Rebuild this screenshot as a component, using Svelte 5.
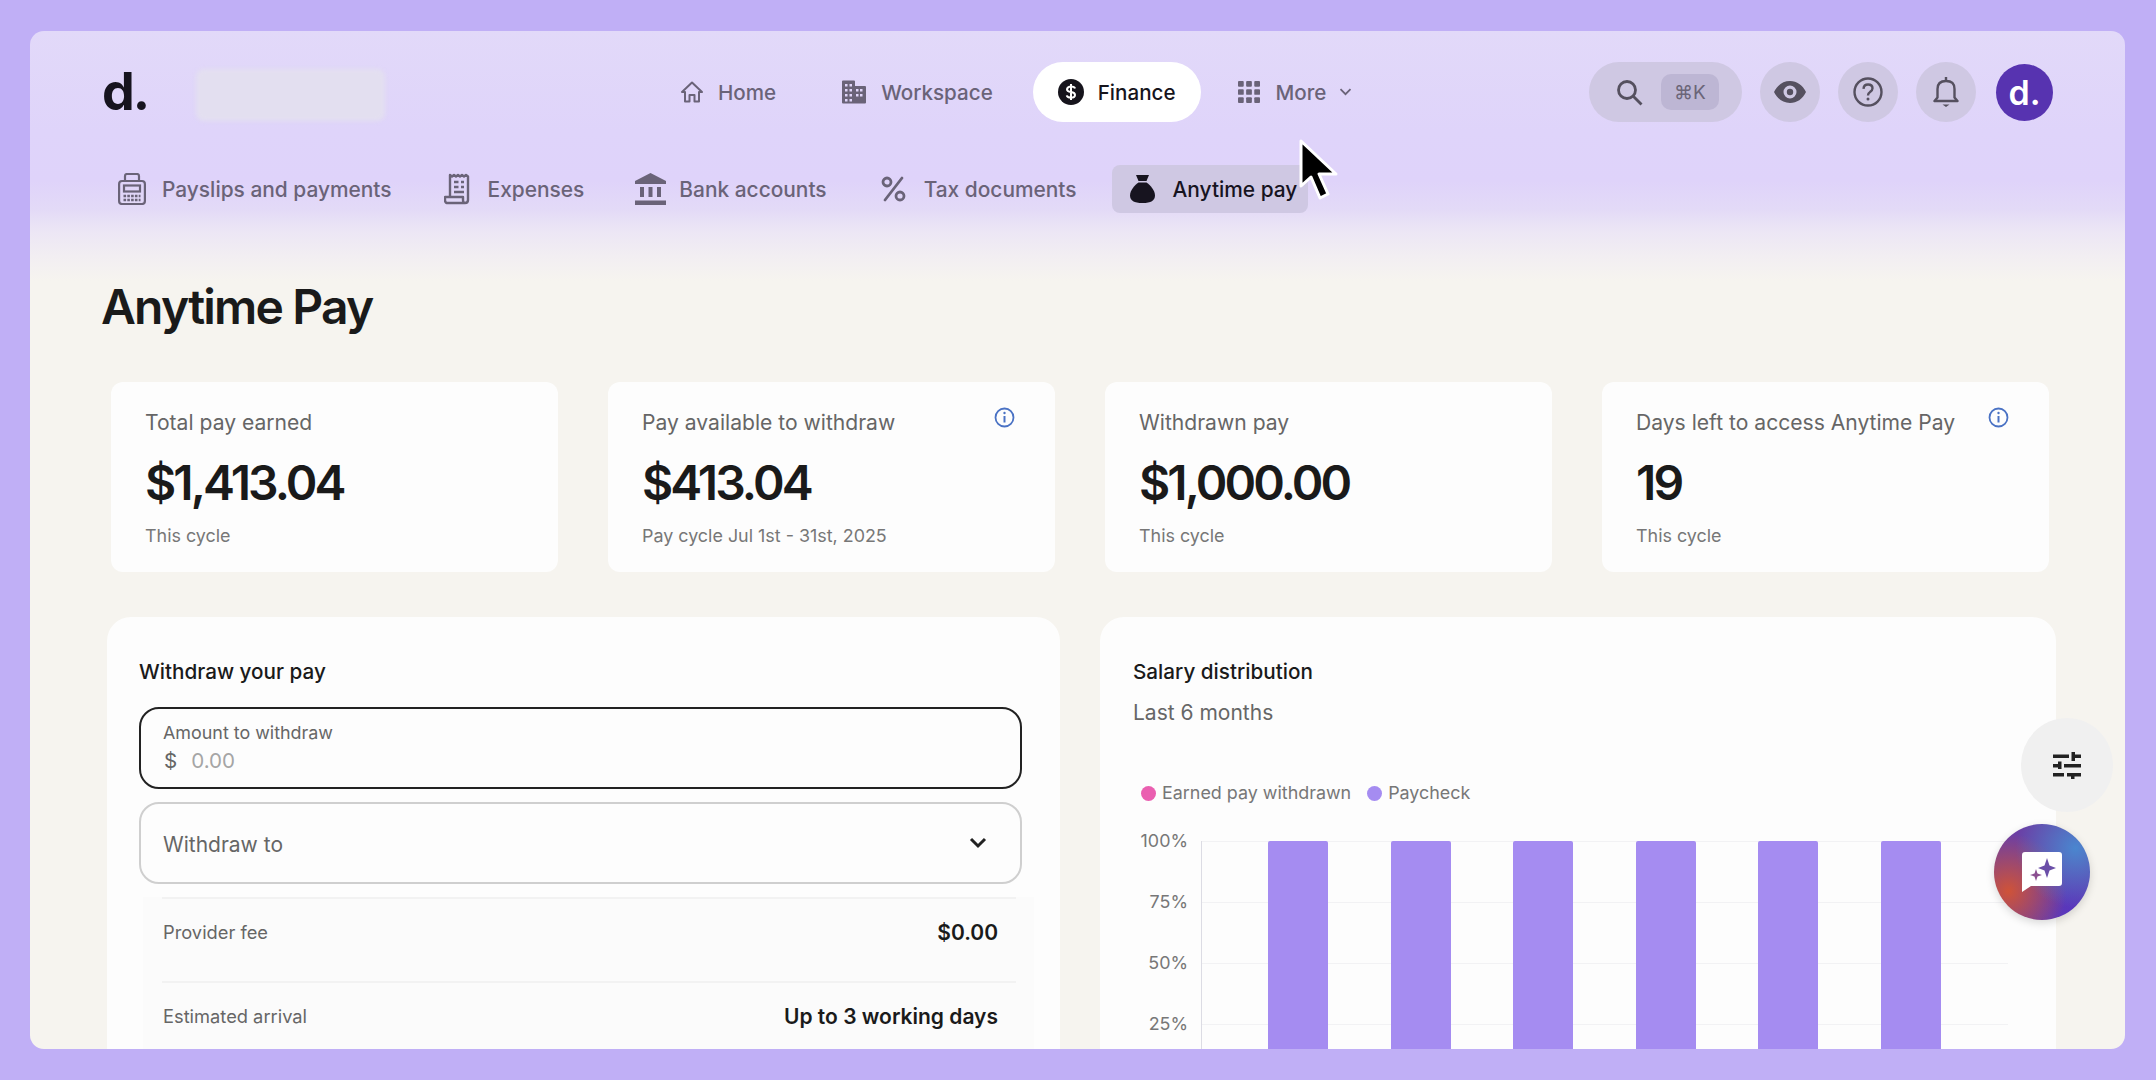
<script>
	const nav = [
		{ label: 'Home', icon: 'home' },
		{ label: 'Workspace', icon: 'building' },
		{ label: 'Finance', icon: 'dollar', active: true },
		{ label: 'More', icon: 'grid', caret: true }
	];
	const tabs = [
		{ label: 'Payslips and payments', icon: 'register' },
		{ label: 'Expenses', icon: 'receipt' },
		{ label: 'Bank accounts', icon: 'bank' },
		{ label: 'Tax documents', icon: 'percent' },
		{ label: 'Anytime pay', icon: 'bag', active: true }
	];
	const stats = [
		{ label: 'Total pay earned', value: '$1,413.04', note: 'This cycle' },
		{ label: 'Pay available to withdraw', value: '$413.04', note: 'Pay cycle Jul 1st - 31st, 2025', info: true },
		{ label: 'Withdrawn pay', value: '$1,000.00', note: 'This cycle' },
		{ label: 'Days left to access Anytime Pay', value: '19', note: 'This cycle', info: true }
	];
	const ticks = ['100%', '75%', '50%', '25%'];
	const bars = [1, 2, 3, 4, 5, 6];
</script>

{#snippet icon(name)}
	{#if name === 'home'}
		<svg class="ico" width="24" height="24" viewBox="0 0 24 24" fill="none" stroke="currentColor" stroke-width="2" stroke-linejoin="round"><path d="M2 12 12 2.500 22 12h-3v9.500h-4.500V15h-5v6.500H5V12z" /></svg>
	{:else if name === 'building'}
		<svg class="ico" width="26" height="24" viewBox="0 0 26 24" fill="currentColor"><path fill-rule="evenodd" d="M1 1.500Q1 .5 2 .5h11q1 0 1 1V6h10q1 0 1 1v15.500q0 1-1 1H2q-1 0-1-1zM4 4v2.500h2.500V4zm4.500 0v2.500H11V4zM4 9v2.500h2.500V9zm4.500 0v2.500H11V9zM4 14v2.500h2.500V14zm4.500 0v2.500H11V14zM4 19v2.500h2.500V19zm4.500 0v2.500H11V19zM15 9v2.500h2.500V9zm4 0v2.500h2.500V9zm-4 5v2.500h2.500V14zm4 0v2.500h2.500V14z" /></svg>
	{:else if name === 'dollar'}
		<svg class="ico" width="26" height="26" viewBox="0 0 26 26"><circle cx="13" cy="13" r="13" fill="currentColor" /><path d="M17 9.500Q16.500 7.500 13 7.500T9 10.200q0 2.300 4 2.800t4 2.900q0 2.600-4 2.600t-4.200-2.200M13 5v16" fill="none" stroke="#fff" stroke-width="2" /></svg>
	{:else if name === 'grid'}
		<svg class="ico" width="22" height="22" viewBox="0 0 23 23" fill="currentColor">
			{#each [0, 8.5, 17] as y}
				{#each [0, 8.5, 17] as x}
					<rect x={x} y={y} width="6" height="6" rx="1" />
				{/each}
			{/each}
		</svg>
	{:else if name === 'register'}
		<svg class="ico" width="28" height="32" viewBox="0 0 28 32" fill="none" stroke="currentColor" stroke-width="2.200"><path d="M7 8V3q0-2 2-2h10q2 0 2 2v5" /><rect x="1.100" y="8" width="25.800" height="23" rx="3" /><rect x="6" y="12.500" width="16" height="6" /><path d="M5.500 23h17M5.500 27h17" stroke-width="2.600" stroke-dasharray="2.600 1.200" /></svg>
	{:else if name === 'receipt'}
		<svg class="ico" width="28" height="32" viewBox="0 0 28 32" fill="none" stroke="currentColor" stroke-width="2.400"><path d="M6 24V2l2 1.500L10 2l2 1.500L14 2l2 1.500L18 2l2 1.500L22 2l2 1.500V27q0 3-3 3H4q-3 0-3-3v-3h18v3q0 3 2 3" stroke-linejoin="round" /><path d="M10 9h4.500M10 14h4.500M10 19h10M17 9h3M17 14h3" /></svg>
	{:else if name === 'bank'}
		<svg class="ico" width="31" height="32" viewBox="0 0 31 32" fill="currentColor"><path d="M15.500 0 31 8v3H0V8z" /><rect x="5" y="14" width="4" height="10" /><rect x="13.500" y="14" width="4" height="10" /><rect x="22" y="14" width="4" height="10" /><rect x="0" y="27.500" width="31" height="4.500" /></svg>
	{:else if name === 'percent'}
		<svg class="ico" width="25" height="26" viewBox="0 0 25 26" fill="none" stroke="currentColor" stroke-width="2.800"><circle cx="6" cy="6" r="4" /><circle cx="19" cy="20" r="4" /><path d="M21 2 4 24" stroke-linecap="round" /></svg>
	{:else if name === 'bag'}
		<svg class="ico" width="25" height="28" viewBox="0 0 25 28" fill="currentColor"><path d="M6 0h13l-2.500 6h-8z" /><path d="M8.500 7.500h8C20 10 25 15 25 20.500 25 25.500 21 28 12.500 28S0 25.500 0 20.500C0 15 5 10 8.500 7.500z" /></svg>
	{/if}
{/snippet}

<main class="page">
	<div class="window">
		<header class="topbar">
			<span class="logo">d.</span>
			<div class="org-blur"></div>
			<nav class="nav">
				{#each nav as item}
					<a class="nav-item" class:active={item.active} class:more={item.caret} href="#top">
						{@render icon(item.icon)}
						<span>{item.label}</span>
						{#if item.caret}
							<svg class="caret" width="13" height="8" viewBox="0 0 13 8" fill="none" stroke="currentColor" stroke-width="1.800"><path d="m1.500 1.200 5 5 5-5" /></svg>
						{/if}
					</a>
				{/each}
			</nav>
			<div class="actions">
				<div class="search">
					<svg width="27" height="27" viewBox="0 0 27 27" fill="none" stroke="currentColor" stroke-width="2.800"><circle cx="11" cy="11" r="8.500" /><path d="m17 17 8.500 8.500" /></svg>
					<kbd>⌘K</kbd>
				</div>
				<button class="round" aria-label="Preview">
					<svg width="32" height="22" viewBox="0 0 32 22"><path fill-rule="evenodd" fill="currentColor" d="M0 11C3.500 4 9 0 16 0s12.500 4 16 11c-3.500 7-9 11-16 11S3.500 18 0 11zm16 6.500a6.500 6.500 0 1 0 0-13 6.500 6.500 0 0 0 0 13z" /><circle cx="16" cy="11" r="3.200" fill="currentColor" /></svg>
				</button>
				<button class="round" aria-label="Help">
					<svg width="30" height="30" viewBox="0 0 30 30" fill="none" stroke="currentColor" stroke-width="2.400"><circle cx="15" cy="15" r="13.500" /><path d="M10.500 11.800q.3-4.300 4.600-4.300 4.400 0 4.400 3.800 0 2.200-2.400 3.600-2.100 1.300-2.100 3.600" /><circle cx="15" cy="22" r="1.500" fill="currentColor" stroke="none" /></svg>
				</button>
				<button class="round" aria-label="Notifications">
					<svg width="26" height="30" viewBox="0 0 26 30" fill="none" stroke="currentColor" stroke-width="2.400"><path d="M1.500 24h23l-3-3.500V12Q21.500 4 13 4T4.500 12v8.500z" stroke-linejoin="round" /><path d="M13 0v4" /><path d="M9.500 27.500h7L13 30z" fill="currentColor" stroke="none" /></svg>
				</button>
				<span class="avatar">d.</span>
			</div>
		</header>

		<div class="tabs">
			{#each tabs as tab}
				<a class="tab" class:active={tab.active} href="#top">
					{@render icon(tab.icon)}
					<span>{tab.label}</span>
				</a>
			{/each}
		</div>

		<h1>Anytime Pay</h1>

		<section class="stats">
			{#each stats as stat}
				<article class="stat">
					<p class="stat-label">{stat.label}</p>
					<p class="stat-value">{stat.value}</p>
					<p class="stat-note">{stat.note}</p>
					{#if stat.info}
						<svg class="info" width="21" height="21" viewBox="0 0 21 21" fill="none" stroke="currentColor" stroke-width="1.800"><circle cx="10.500" cy="10.500" r="9" /><path d="M10.500 9v6.500" stroke-width="2" /><circle cx="10.500" cy="6" r="1.200" fill="currentColor" stroke="none" /></svg>
					{/if}
				</article>
			{/each}
		</section>

		<section class="panels">
			<div class="panel">
				<h2>Withdraw your pay</h2>
				<div class="field amount">
					<span class="field-label">Amount to withdraw</span>
					<span class="field-value"><span class="cur">$</span><span class="ph">0.00</span></span>
				</div>
				<div class="field select">
					<span>Withdraw to</span>
					<svg width="18" height="12" viewBox="0 0 18 12" fill="none" stroke="#222" stroke-width="3"><path d="m2 2 7 7 7-7" /></svg>
				</div>
				<div class="row"><span>Provider fee</span><strong>$0.00</strong></div>
				<div class="row"><span>Estimated arrival</span><strong>Up to 3 working days</strong></div>
			</div>

			<div class="panel chart-panel">
				<h2>Salary distribution</h2>
				<p class="range">Last 6 months</p>
				<div class="legend">
					<span class="dot pink"></span><span>Earned pay withdrawn</span>
					<span class="dot violet"></span><span>Paycheck</span>
				</div>
				<div class="chart">
					<div class="y-axis">
						{#each ticks as tick}
							<span>{tick}</span>
						{/each}
					</div>
					<div class="plot">
						{#each bars as bar (bar)}
							<div class="bar"></div>
						{/each}
					</div>
				</div>
			</div>
		</section>

		<button class="float-settings" aria-label="Settings">
			<svg width="28" height="27" viewBox="0 0 28 27" fill="#222"><path d="M0 2.500h16V6H0zM18.500 0H22v2.500h6V6h-6v3h-3.500zM0 12h5V9.500h3.500V17H5v-1.500H0zM11 12h17v3.500H11zM0 21h11v3.500H0zM14 21h14v3.500h-6.500V27H18v-2.500h-4z" /></svg>
		</button>
		<button class="float-ai" aria-label="Assistant">
			<svg width="40" height="40" viewBox="0 0 40 40"><path d="M3 0h34q3 0 3 3v28q0 3-3 3H9l-9 6V3q0-3 3-3z" fill="#fff" /><path d="m25 6 2.500 7.500L34 16l-6.500 2.500L25 26l-2.500-7.500L16 16l6.500-2.500z" fill="#6b4fa8" /><path d="m14 17 1.500 4.500L20 23l-4.500 1.500L14 29l-1.500-4.500L8 23l4.500-1.500z" fill="#8b4f90" /></svg>
		</button>

		<svg class="cursor" width="44" height="64" viewBox="0 0 44 64"><path d="M3 2v45l10-9 9 21 8-4-9-20h17z" fill="#000" stroke="#fff" stroke-width="3" stroke-linejoin="round" /></svg>
	</div>
</main>

<style>
	:global(body) {
		margin: 0;
		background: #c0aff6;
		overflow: hidden;
	}

	.page {
		height: 1080px;
		box-sizing: border-box;
		padding: 31px 31px 31px 30px;
		font-family: Inter, 'DejaVu Sans', sans-serif;
		color: #1a1a1a;
	}

	.window {
		position: relative;
		height: 1018px;
		overflow: hidden;
		border-radius: 14px;
		background: linear-gradient(180deg, #e2d9f9 0, #dfd4fa 100px, #dfd3fa 150px, #e3daf7 178px, #ece6f5 200px, #f2eef2 225px, #f6f4ef 250px);
	}

	.topbar {
		display: flex;
		align-items: center;
		height: 60px;
		padding: 31px 72px 0 72px;
	}

	.logo {
		width: 45px;
		font-size: 52px;
		font-weight: 700;
		letter-spacing: -2px;
		line-height: 60px;
		color: #17141f;
	}

	.org-blur {
		width: 189px;
		height: 52px;
		margin: 6px 0 0 49px;
		border-radius: 8px;
		background: #e3dff0;
		filter: blur(2px);
	}

	.nav {
		display: flex;
		align-items: center;
		gap: 17px;
		margin-left: 271px;
	}

	.nav-item {
		display: flex;
		align-items: center;
		gap: 14px;
		height: 60px;
		padding: 0 24px;
		border-radius: 30px;
		font-size: 20.600px;
		font-weight: 500;
		color: #6a6378;
		text-decoration: none;
	}

	.nav-item.active {
		margin: 0 -1px;
		padding: 0 25px;
		background: #fff;
		color: #16141c;
	}

	.nav-item.more {
		gap: 16px;
		margin-left: -3px;
	}

	.ico {
		flex-shrink: 0;
	}

	.caret {
		margin-left: -3px;
	}

	.actions {
		display: flex;
		align-items: center;
		gap: 18px;
		margin-left: auto;
	}

	.search {
		display: flex;
		align-items: center;
		gap: 18px;
		width: 153px;
		height: 60px;
		box-sizing: border-box;
		padding-left: 27px;
		border-radius: 30px;
		background: #cfc8e3;
		color: #55505f;
	}

	kbd {
		display: flex;
		align-items: center;
		justify-content: center;
		width: 58px;
		height: 36px;
		border-radius: 10px;
		background: #bdb6d4;
		font-family: Inter, 'DejaVu Sans', sans-serif;
		font-size: 19px;
		color: #6b6578;
	}

	.round {
		display: flex;
		align-items: center;
		justify-content: center;
		width: 60px;
		height: 60px;
		padding: 0;
		border: 0;
		border-radius: 50%;
		background: #cfc8e3;
		color: #55505f;
	}

	.avatar {
		display: flex;
		align-items: center;
		justify-content: center;
		width: 57px;
		height: 57px;
		margin-left: 2px;
		border-radius: 50%;
		background: #5733b0;
		color: #fff;
		font-size: 34px;
		font-weight: 600;
	}

	.tabs {
		display: flex;
		align-items: center;
		gap: 22px;
		margin: 43px 0 0 71px;
	}

	.tab {
		display: flex;
		align-items: center;
		gap: 16px;
		height: 48px;
		padding: 0 13px 0 17px;
		border-radius: 8px;
		font-size: 20.900px;
		font-weight: 500;
		color: #6a6378;
		text-decoration: none;
	}

	.tab:nth-child(3) {
		gap: 13px;
		margin-left: -1px;
		padding-right: 15px;
	}

	.tab:nth-child(4) {
		gap: 18px;
	}

	.tab.active {
		gap: 18px;
		padding: 0 11px 0 18px;
		background: #cfc8e3;
		color: #17141f;
	}

	h1 {
		margin: 65px 0 0 71px;
		font-size: 48px;
		line-height: 58px;
		font-weight: 600;
		letter-spacing: -1.800px;
		color: #1a1a1a;
	}

	.stats {
		display: grid;
		grid-template-columns: repeat(4, 447px);
		gap: 50px;
		margin: 46px 0 0 81px;
	}

	.stat {
		position: relative;
		height: 190px;
		box-sizing: border-box;
		padding: 28px 0 0 34px;
		border-radius: 12px;
		background: #fdfdfd;
	}

	.stat p {
		margin: 0;
	}

	.stat-label {
		font-size: 21.100px;
		line-height: 26px;
		color: #666;
	}

	.stat .stat-value {
		margin-top: 18px;
		font-size: 48px;
		line-height: 58px;
		font-weight: 600;
		letter-spacing: -2.900px;
		color: #1a1a1a;
	}

	.stat .stat-note {
		margin-top: 12px;
		font-size: 17.900px;
		line-height: 24px;
		color: #777;
	}

	.info {
		position: absolute;
		top: 25px;
		right: 40px;
		color: #4a72c4;
	}

	.panels {
		display: grid;
		grid-template-columns: 953px 956px;
		gap: 40px;
		margin: 45px 0 0 77px;
	}

	.panel {
		height: 560px;
		box-sizing: border-box;
		padding: 42px 38px 0 32px;
		border-radius: 24px;
		background: #fdfdfd;
	}

	h2 {
		margin: 0;
		font-size: 20.700px;
		line-height: 26px;
		font-weight: 500;
		color: #1a1a1a;
	}

	.field {
		box-sizing: border-box;
		height: 82px;
		border-radius: 20px;
		padding: 0 22px;
	}

	.amount {
		display: flex;
		flex-direction: column;
		justify-content: center;
		gap: 4px;
		margin-top: 22px;
		border: 2px solid #222;
	}

	.field-label {
		font-size: 17.900px;
		line-height: 22px;
		color: #666;
	}

	.field-value {
		display: flex;
		gap: 14px;
		margin-left: 1px;
		font-size: 20.600px;
		line-height: 26px;
	}

	.cur {
		color: #666;
	}

	.ph {
		color: #a5a5a5;
	}

	.select {
		display: flex;
		align-items: center;
		justify-content: space-between;
		margin-top: 13px;
		padding: 0 33px 0 22px;
		border: 2px solid #cfcfcf;
		font-size: 21px;
		color: #666;
	}

	.select span {
		margin-top: 2px;
	}

	.row {
		display: flex;
		align-items: center;
		justify-content: space-between;
		box-sizing: border-box;
		height: 84px;
		margin: 0 -12px 0 4px;
		padding: 0 36px 14px 20px;
		background: #fbfbfb linear-gradient(#f2f2f2, #f2f2f2) center top / 854px 2px no-repeat;
		font-size: 18.300px;
		color: #666;
	}

	.select + .row {
		margin-top: 13px;
	}

	.row strong {
		font-size: 21px;
		font-weight: 600;
		color: #1a1a1a;
	}

	.chart-panel {
		padding-left: 33px;
		padding-right: 28px;
	}

	.range {
		margin: 15px 0 0;
		font-size: 21px;
		line-height: 26px;
		color: #666;
	}

	.legend {
		display: flex;
		align-items: center;
		margin: 54px 0 0 8px;
		font-size: 17.900px;
		line-height: 26px;
		color: #777;
	}

	.dot {
		width: 15px;
		height: 15px;
		margin-right: 6px;
		border-radius: 50%;
	}

	.dot.pink {
		background: #ea5fb0;
	}

	.dot.violet {
		margin-left: 16px;
		background: #a58cf1;
	}

	.chart {
		display: flex;
		margin: 35px 0 0 1px;
	}

	.y-axis {
		display: flex;
		flex-direction: column;
		align-items: flex-end;
		gap: 37px;
		width: 54px;
		margin-top: -12px;
		font-size: 17.900px;
		line-height: 24px;
		color: #777;
	}

	.plot {
		display: flex;
		gap: 62.600px;
		width: 807px;
		height: 240px;
		box-sizing: border-box;
		margin-left: 13px;
		padding-left: 66px;
		border-left: 1px solid #dcdce4;
		background: repeating-linear-gradient(180deg, #f2f2f4 0 1px, transparent 1px 61px);
	}

	.bar {
		width: 60px;
		height: 100%;
		border-radius: 2px 2px 0 0;
		background: #a58cf1;
	}

	.float-settings {
		position: absolute;
		left: 1991px;
		top: 687px;
		display: flex;
		align-items: center;
		justify-content: center;
		width: 92px;
		height: 94px;
		border: 0;
		border-radius: 50%;
		background: #f0f0f0;
	}

	.float-ai {
		position: absolute;
		left: 1964px;
		top: 793px;
		display: flex;
		align-items: center;
		justify-content: center;
		width: 96px;
		height: 96px;
		padding: 0;
		border: 0;
		border-radius: 50%;
		background:
			radial-gradient(circle at 85% 25%, #4a86cf 0, rgba(74, 134, 207, 0) 55%),
			radial-gradient(circle at 15% 70%, #cf5338 0, rgba(207, 83, 56, 0) 55%),
			radial-gradient(circle at 80% 90%, #5836bd 0, rgba(88, 54, 189, 0) 50%),
			#6b3fa5;
		box-shadow: 0 3px 8px rgba(0, 0, 0, 0.15);
	}

	.cursor {
		position: absolute;
		left: 1268px;
		top: 108px;
	}
</style>
